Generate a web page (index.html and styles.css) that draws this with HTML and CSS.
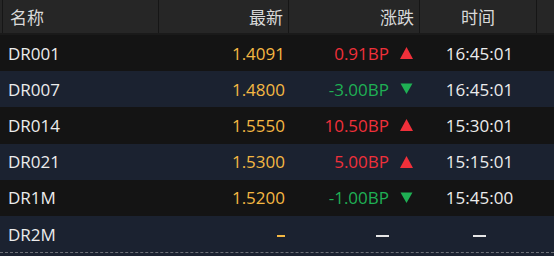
FILE: index.html
```html
<!DOCTYPE html>
<html lang="zh-CN">
<head>
<meta charset="utf-8">
<link rel="stylesheet" href="styles.css">
</head>
<body>
<div class="table">
  <div class="head">
    <div class="hc name">名称</div>
    <div class="hc num">最新</div>
    <div class="hc num">涨跌</div>
    <div class="hc time">时间</div>
    <div class="hc last"></div>
  </div>
  <div class="row odd">
    <div class="c name">DR001</div>
    <div class="c price">1.4091</div>
    <div class="c chg up">0.91BP<svg class="tri" viewBox="0 0 13 12"><path d="M6.5 0L13 12H0Z"/></svg></div>
    <div class="c time">16:45:01</div>
  </div>
  <div class="row even">
    <div class="c name">DR007</div>
    <div class="c price">1.4800</div>
    <div class="c chg down">-3.00BP<svg class="tri" viewBox="0 0 13 12"><path d="M0.5 0.5H12.5L6.5 11Z"/></svg></div>
    <div class="c time">16:45:01</div>
  </div>
  <div class="row odd">
    <div class="c name">DR014</div>
    <div class="c price">1.5550</div>
    <div class="c chg up">10.50BP<svg class="tri" viewBox="0 0 13 12"><path d="M6.5 0L13 12H0Z"/></svg></div>
    <div class="c time">15:30:01</div>
  </div>
  <div class="row even">
    <div class="c name">DR021</div>
    <div class="c price">1.5300</div>
    <div class="c chg up">5.00BP<svg class="tri" viewBox="0 0 13 12"><path d="M6.5 0L13 12H0Z"/></svg></div>
    <div class="c time">15:15:01</div>
  </div>
  <div class="row odd">
    <div class="c name">DR1M</div>
    <div class="c price">1.5200</div>
    <div class="c chg down">-1.00BP<svg class="tri" viewBox="0 0 13 12"><path d="M0.5 0.5H12.5L6.5 11Z"/></svg></div>
    <div class="c time">15:45:00</div>
  </div>
  <div class="row even last-row">
    <div class="c name">DR2M</div>
    <div class="c price"><span class="dash"></span></div>
    <div class="c chg none"><span class="dash white"></span><span class="tri-space"></span></div>
    <div class="c time"><span class="dash white"></span></div>
  </div>
</div>
</body>
</html>
```
FILE: styles.css
```css
html, body {
  margin: 0;
  padding: 0;
  background: #1b2230;
}
body {
  width: 554px;
  height: 256px;
  overflow: hidden;
  font-family: "Open Sans", "Noto Sans CJK SC", sans-serif;
  font-size: 17px;
  color: #ececec;
}
.table {
  display: flex;
  flex-direction: column;
}
.head {
  display: grid;
  grid-template-columns: 159px 130px 131px 117px 17px;
  height: 33px;
  background: #262626;
  border-bottom: 2px solid #1a1a1a;
  box-sizing: content-box;
}
.hc {
  display: flex;
  align-items: center;
  border-right: 1px solid #161616;
  color: #d9d9d9;
  font-family: "Noto Sans CJK SC", sans-serif;
  font-size: 17px;
  padding: 0 5px;
}
.hc.name {
  border-left: 1px solid #161616;
  margin-left: 2px;
  padding-left: 7px;
}
.hc.num {
  justify-content: flex-end;
}
.hc.time {
  justify-content: center;
}
.hc.last {
  border-right: none;
}
.row {
  display: grid;
  grid-template-columns: 159px 130px 131px 117px 17px;
  height: 36.2px;
  align-items: center;
}
.row.odd { background: #141414; }
.row.even { background: #1b2230; }
.last-row {
  border-bottom: 1px dashed #6a6e75;
}
.c {
  display: flex;
  align-items: center;
}
.c.name {
  padding-left: 8px;
}
.c.price {
  justify-content: flex-end;
  padding-right: 4px;
  color: #f4b843;
}
.c.chg {
  justify-content: flex-end;
  padding-right: 7px;
}
.c.chg.up { color: #f0303a; fill: #f0303a; }
.c.chg.down { color: #1fb054; fill: #1fb054; }
.tri {
  width: 13px;
  height: 12px;
  margin-left: 11px;
}
.tri-space {
  display: inline-block;
  width: 13px;
  margin-left: 11px;
}
.c.time {
  justify-content: center;
  padding-left: 2px;
}
.dash {
  display: inline-block;
  width: 8px;
  height: 1.5px;
  background: #f4b843;
  margin-top: 4px;
}
.dash.white {
  width: 13px;
  background: #e6e6e6;
}
```
